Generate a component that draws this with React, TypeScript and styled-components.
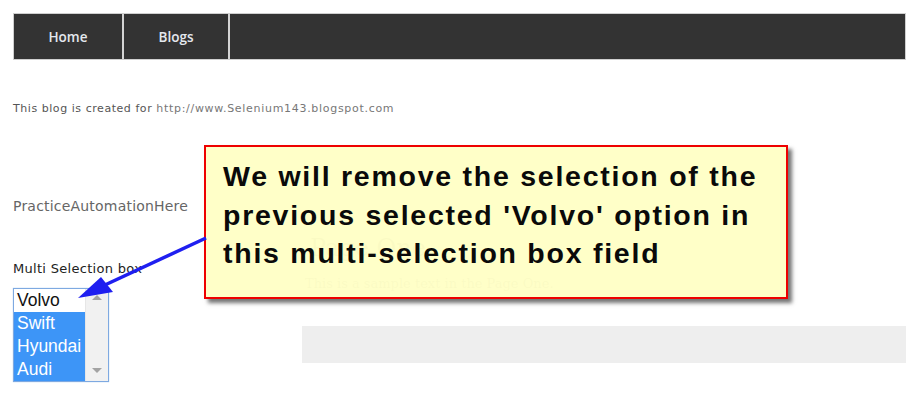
import React from "react";
import styled, { createGlobalStyle } from "styled-components";

const Global = createGlobalStyle`
  html, body { margin: 0; padding: 0; background: #fff; }
  body { font-family: "DejaVu Sans", Verdana, sans-serif; }
`;

const Page = styled.div`
  position: relative;
  width: 916px;
  height: 409px;
  box-sizing: border-box;
  padding: 13px 10px 0 13px;
  display: flex;
  flex-direction: column;
  overflow: hidden;
`;

const NavBar = styled.nav`
  display: flex;
  height: 47px;
  box-sizing: border-box;
  background: #333;
  border: 1px solid #cfcfcf;
`;

const NavItem = styled.a<{ $w: number }>`
  display: flex;
  align-items: center;
  justify-content: center;
  box-sizing: border-box;
  width: ${(p) => p.$w}px;
  border-right: 2px solid #d4d4d4;
  color: #e4e8ee;
  font-family: "Open Sans", sans-serif;
  font-size: 13.5px;
  font-weight: 600;
  text-decoration: none;
`;

const BlogLine = styled.p`
  margin: 42px 0 0;
  font-family: "DejaVu Sans", sans-serif;
  font-size: 11px;
  color: #555;
  letter-spacing: 0.55px;
`;

const Url = styled.span`
  color: #777;
  letter-spacing: 0.7px;
`;

const Title = styled.p`
  margin: 83px 0 0;
  font-family: "DejaVu Sans", sans-serif;
  font-size: 14px;
  color: #666;
  letter-spacing: 0.2px;
`;

const Main = styled.div`
  display: flex;
`;

const LeftCol = styled.div`
  display: flex;
  flex-direction: column;
  width: 289px;
`;

const Label = styled.div`
  margin-top: 47px;
  font-family: "DejaVu Sans", sans-serif;
  font-size: 13px;
  color: #222;
  letter-spacing: 0.3px;
`;

const ListBox = styled.div`
  margin-top: 12px;
  width: 96px;
  height: 94px;
  box-sizing: border-box;
  border: 1px solid #7ea9e1;
  box-shadow: 0 0 1px #9cc0ee;
  display: flex;
  background: #fff;
`;

const Options = styled.div`
  flex: 1;
  display: flex;
  flex-direction: column;
`;

const Option = styled.div<{ $sel?: boolean }>`
  height: 23px;
  line-height: 23px;
  padding-left: 3px;
  font-family: "Liberation Sans", Arial, sans-serif;
  font-size: 17.5px;
  white-space: nowrap;
  overflow: hidden;
  background: ${(p) => (p.$sel ? "#3d95f7" : "#fff")};
  color: ${(p) => (p.$sel ? "#fff" : "#111")};
`;

const Scroll = styled.div`
  width: 23px;
  flex: none;
  background: #f1f1f1;
  border-left: 1px solid #e6e6e6;
  display: flex;
  flex-direction: column;
  justify-content: space-between;
  align-items: center;
  padding: 6px 0 8px;
  box-sizing: border-box;
`;

const Tri = styled.div<{ $up?: boolean }>`
  width: 0;
  height: 0;
  border-left: 5px solid transparent;
  border-right: 5px solid transparent;
  ${(p) => (p.$up ? "border-bottom: 5px solid #a3a3a3;" : "border-top: 5px solid #a3a3a3;")}
`;

const RightCol = styled.div`
  flex: 1;
  display: flex;
  flex-direction: column;
`;

const PageHead = styled.h2`
  margin: 20px 0 0 8px;
  font-family: "DejaVu Serif", Georgia, serif;
  font-weight: normal;
  font-size: 24px;
  color: #888;
`;

const Sample = styled.p`
  margin: 14px 0 0 3px;
  font-family: "DejaVu Serif", Georgia, serif;
  font-size: 13px;
  color: #888;
`;

const GrayBar = styled.div`
  margin-top: 35px;
  height: 37px;
  flex: none;
  background: #eee;
`;

const Callout = styled.div`
  position: absolute;
  left: 204px;
  top: 145px;
  width: 584px;
  height: 154px;
  box-sizing: border-box;
  border: 2px solid #ee0000;
  background: rgba(255, 255, 198, 0.96);
  box-shadow: 4px 4px 4px rgba(0, 0, 0, 0.55);
  padding: 10px 0 0 17px;
  font-family: "Liberation Sans", Arial, sans-serif;
  font-weight: bold;
  font-size: 28.5px;
  line-height: 38.5px;
  letter-spacing: 1.75px;
  white-space: nowrap;
  color: #0a0a0a;
`;

const Arrow = styled.svg`
  position: absolute;
  left: 0;
  top: 0;
  pointer-events: none;
`;

export default function App() {
  return (
    <>
      <Global />
      <Page>
        <NavBar>
          <NavItem $w={110} href="#">Home</NavItem>
          <NavItem $w={106} href="#">Blogs</NavItem>
        </NavBar>
        <BlogLine>
          This blog is created for <Url>http://www.Selenium143.blogspot.com</Url>
        </BlogLine>
        <Title>PracticeAutomationHere</Title>
        <Main>
          <LeftCol>
            <Label>Multi Selection box</Label>
            <ListBox>
              <Options>
                <Option>Volvo</Option>
                <Option $sel>Swift</Option>
                <Option $sel>Hyundai</Option>
                <Option $sel>Audi</Option>
              </Options>
              <Scroll>
                <Tri $up />
                <Tri />
              </Scroll>
            </ListBox>
          </LeftCol>
          <RightCol>
            <PageHead>Page One</PageHead>
            <Sample>This is a sample text in the Page One.</Sample>
            <GrayBar />
          </RightCol>
        </Main>
        <Callout>
          We will remove the selection of the
          <br />
          previous selected 'Volvo' option in
          <br />
          this multi-selection box field
        </Callout>
        <Arrow width="916" height="409" viewBox="0 0 916 409">
          <line x1="206" y1="238" x2="92" y2="291" stroke="#1f1ff0" strokeWidth="3.5" />
          <polygon points="78,298 101,277 113,292" fill="#1f1ff0" />
        </Arrow>
      </Page>
    </>
  );
}
